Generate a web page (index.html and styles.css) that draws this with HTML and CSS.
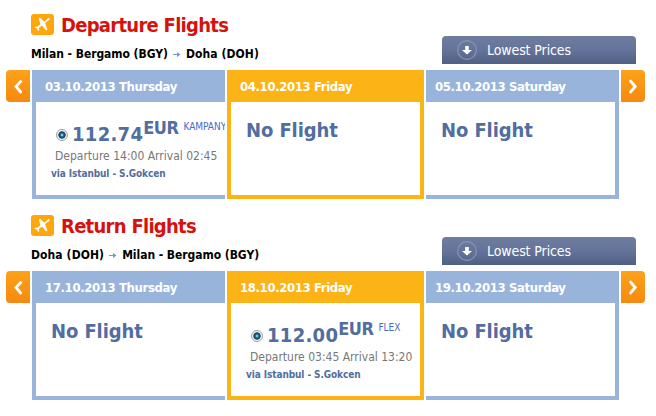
FILE: index.html
```html
<!DOCTYPE html>
<html lang="en">
<head>
  <meta charset="UTF-8">
  <title>Flights</title>
  <link rel="stylesheet" href="styles.css">
</head>
<body>

<!-- shared icons -->
<svg class="icons" width="0" height="0">
  <symbol id="plane" viewBox="0 0 23 21">
    <path d="M18.300 4.200c.7.700.3 1.500-.5 2.100l-3.700 2.800 2.300 6.700-1.300.8-4-5-3.300 2.400.4 2.300-1 .6-1.200-2.400-2.700-.8.800-1 2.400-.1 2.900-2.400L7.800 4.500l1.500-.5 4.100 3.700 3-2.800c.7-.7 1.400-1.100 1.900-.7z" fill="#fff"/>
  </symbol>
  <symbol id="left" viewBox="0 0 24 32">
    <path d="M14.700 11.500 10 16.500l4.700 5.500" fill="none" stroke="#fff" stroke-width="2.800" stroke-linecap="round"/>
  </symbol>
  <symbol id="right" viewBox="0 0 24 32">
    <path d="M9.500 11l4.700 5.500-4.700 5.500" fill="none" stroke="#fff" stroke-width="2.800" stroke-linecap="round"/>
  </symbol>
  <symbol id="to" viewBox="0 0 8 7">
    <path d="M0 3h4V1l3.500 2.500L4 6V4H0z" fill="#6d98dc"/>
  </symbol>
  <symbol id="down" viewBox="0 0 20 20">
    <circle cx="10" cy="10" r="9.300" fill="none" stroke="#8895b5" stroke-width="1.200"/>
    <path d="M8.200 6h3.600v4h3.200l-5 4.600L5 10h3.200z" fill="#fff"/>
  </symbol>
</svg>

<section class="flights">
  <div class="top">
    <div class="info">
      <h2><svg class="plane"><use href="#plane"/></svg><span class="title">Departure Flights</span></h2>
      <p class="route"><span class="bgy">Milan - Bergamo (BGY)</span><svg class="to"><use href="#to"/></svg><span class="doh">Doha (DOH)</span></p>
    </div>
    <a class="lowest"><svg class="down"><use href="#down"/></svg><span>Lowest Prices</span></a>
  </div>
  <div class="days">
    <a class="nav prev"><svg><use href="#left"/></svg></a>
    <div class="day first">
      <h3><span>03.10.2013 Thursday</span></h3>
      <div class="fare">
        <div class="price"><i class="radio"></i><b class="amount">112.74</b><b class="cur">EUR</b><span class="kind">KAMPANY</span></div>
        <div class="time">Departure 14:00 Arrival 02:45</div>
        <div class="via">via Istanbul - S.Gokcen</div>
      </div>
    </div>
    <div class="day active">
      <h3><span>04.10.2013 Friday</span></h3>
      <div class="none">No Flight</div>
    </div>
    <div class="day last">
      <h3><span>05.10.2013 Saturday</span></h3>
      <div class="none">No Flight</div>
    </div>
    <a class="nav next"><svg><use href="#right"/></svg></a>
  </div>
</section>

<section class="flights">
  <div class="top">
    <div class="info">
      <h2><svg class="plane"><use href="#plane"/></svg><span class="title">Return Flights</span></h2>
      <p class="route"><span class="doh">Doha (DOH)</span><svg class="to"><use href="#to"/></svg><span class="bgy">Milan - Bergamo (BGY)</span></p>
    </div>
    <a class="lowest"><svg class="down"><use href="#down"/></svg><span>Lowest Prices</span></a>
  </div>
  <div class="days">
    <a class="nav prev"><svg><use href="#left"/></svg></a>
    <div class="day first">
      <h3><span>17.10.2013 Thursday</span></h3>
      <div class="none">No Flight</div>
    </div>
    <div class="day active">
      <h3><span>18.10.2013 Friday</span></h3>
      <div class="fare">
        <div class="price"><i class="radio"></i><b class="amount">112.00</b><b class="cur">EUR</b><span class="kind">FLEX</span></div>
        <div class="time">Departure 03:45 Arrival 13:20</div>
        <div class="via">via Istanbul - S.Gokcen</div>
      </div>
    </div>
    <div class="day last">
      <h3><span>19.10.2013 Saturday</span></h3>
      <div class="none">No Flight</div>
    </div>
    <a class="nav next"><svg><use href="#right"/></svg></a>
  </div>
</section>

</body>
</html>
```
FILE: styles.css
```css
* {
  box-sizing: border-box;
}

body {
  margin: 0;
  background: #fff;
  font-family: Tahoma, "DejaVu Sans Condensed", "DejaVu Sans", sans-serif;
  font-stretch: condensed;
  overflow: hidden;
}

h2, h3, p {
  margin: 0;
}

.icons {
  display: block;
}

.flights {
  width: 656px;
  height: 201px;
}

.top {
  display: flex;
  justify-content: space-between;
  height: 70px;
  padding: 14px 20px 6px 31px;
}

.info h2 {
  display: flex;
  align-items: center;
  height: 21px;
  font-size: 20px;
  line-height: 21px;
  color: #d5120c;
}

.plane {
  width: 23px;
  height: 21px;
  margin-right: 7px;
  border-radius: 3px;
  background: #fea60c;
}

.title {
  padding-top: 2px;
  letter-spacing: -0.72px;
}

.route {
  display: flex;
  align-items: center;
  margin-top: 11px;
  font-size: 12px;
  line-height: 16px;
  font-weight: bold;
  color: #000;
  white-space: nowrap;
  letter-spacing: -0.05px;
}

.doh {
  letter-spacing: 0.1px;
}

.to {
  width: 8px;
  height: 7px;
  margin: 0 5px;
}

.lowest {
  display: flex;
  align-items: center;
  align-self: flex-end;
  width: 194px;
  height: 28px;
  padding-left: 15px;
  border-radius: 4px 4px 0 0;
  background: linear-gradient(#6f7d9f, #64739a 50%, #506084);
  color: #fff;
  font-size: 14px;
  letter-spacing: -0.1px;
}

.down {
  width: 20px;
  height: 20px;
  margin-right: 10px;
}

.days {
  display: flex;
  gap: 2px;
  padding-left: 6px;
}

.nav {
  width: 24px;
  height: 32px;
  background: linear-gradient(#fda21a, #f5890f);
}

.nav svg {
  display: block;
  width: 24px;
  height: 32px;
}

.prev {
  border-radius: 4px 0 0 4px;
}

.next {
  border-radius: 0 4px 4px 0;
}

.day {
  width: 193px;
  height: 129px;
  border: 0 solid #98b4db;
  border-bottom-width: 4px;
  overflow: hidden;
}

.day h3 {
  height: 32px;
  padding-left: 9px;
  background: #98b4db;
  color: #fff;
  font-size: 13px;
  line-height: 33px;
  letter-spacing: -0.37px;
  white-space: nowrap;
}

.first {
  border-left-width: 4px;
}

.last {
  border-right-width: 4px;
}

.active {
  width: 197px;
  border-color: #fcb316;
  border-left-width: 4px;
  border-right-width: 4px;
}

.active h3 {
  background: #fcb316;
}

.none {
  padding: 15px 0 0 15px;
  color: #526da0;
  font-size: 20px;
  line-height: 26px;
  font-weight: bold;
  letter-spacing: -0.1px;
}

.fare {
  padding: 15px 0 0 15px;
  white-space: nowrap;
  color: #526da0;
}

.price {
  display: flex;
  height: 32px;
  padding-left: 5px;
}

/* selected radio button */
.radio {
  flex: none;
  width: 12px;
  height: 12px;
  margin: 12px 4px 0 0;
  border: 1px solid #9a9fa4;
  border-radius: 50%;
  background: radial-gradient(circle at 50% 50%, #8fdcf5 0 .5px, #227da8 1.500px, #123047 3.300px, #f2f4f5 4px);
}

.amount {
  margin-top: 5px;
  font-size: 20px;
  line-height: 24px;
  letter-spacing: 0.3px;
}

.cur {
  font-size: 18px;
  line-height: 22px;
  letter-spacing: -0.5px;
}

.kind {
  margin: 4px 0 0 5px;
  color: #4668cf;
  font-size: 10px;
  line-height: 12px;
}

.time {
  padding-left: 4px;
  color: #777;
  font-size: 12px;
  line-height: 15px;
}

.via {
  margin-top: 3px;
  font-size: 10px;
  line-height: 14px;
  font-weight: bold;
  letter-spacing: -0.1px;
}
```
